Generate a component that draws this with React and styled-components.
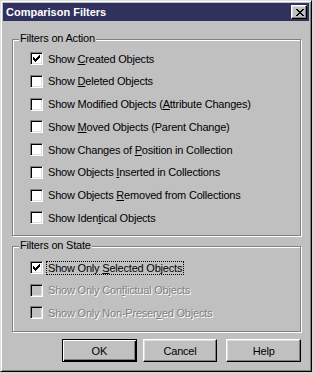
import styled, { createGlobalStyle } from "styled-components";

const FACE = "#c0c0c0";
const SHADOW = "#808080";
const LIGHT = "#dfdfdf";

const GlobalStyle = createGlobalStyle`
  html, body {
    margin: 0;
    padding: 0;
    background: #d6d6d6;
  }
  body {
    font-family: "Liberation Sans", Arial, sans-serif;
    font-size: 11px;
  }
`;

// Window frame
const Window = styled.div`
  box-sizing: border-box;
  width: 312px;
  height: 372px;
  display: flex;
  flex-direction: column;
  background: ${FACE};
  border: 1px solid;
  border-color: ${LIGHT} #000 #000 ${LIGHT};
  box-shadow: inset 1px 1px 0 #fff, inset -1px -1px 0 ${SHADOW};
  padding: 2px;
`;

const TitleBar = styled.div`
  height: 18px;
  flex-shrink: 0;
  display: flex;
  align-items: center;
  justify-content: space-between;
  background: #31315f;
  padding: 0 2px 0 3px;
`;

const Title = styled.span`
  color: #fff;
  font-weight: bold;
  font-size: 11px;
  line-height: 18px;
`;

const CloseButton = styled.button`
  box-sizing: border-box;
  width: 16px;
  height: 14px;
  padding: 0 0 0 1px;
  display: flex;
  align-items: center;
  justify-content: center;
  background: ${FACE};
  border: 1px solid;
  border-color: #fff #000 #000 #fff;
  box-shadow: inset -1px -1px 0 ${SHADOW}, inset 1px 1px 0 ${LIGHT};
`;

const Content = styled.div`
  flex: 1;
  display: flex;
  flex-direction: column;
  padding: 18px 8px 7px 9px;
`;

// Etched group box
const Group = styled.div`
  position: relative;
  box-sizing: border-box;
  width: 289px;
  height: ${({ $height }) => $height}px;
  margin-bottom: ${({ $after }) => $after || 0}px;
  border: 1px solid ${SHADOW};
  box-shadow: inset 1px 1px 0 #fff, 1px 1px 0 #fff;
  padding: ${({ $top }) => $top}px 0 0 17px;
`;

const GroupTitle = styled.span`
  position: absolute;
  left: 6px;
  top: -8px;
  padding: 0 1px;
  background: ${FACE};
  line-height: 13px;
  color: #000;
  letter-spacing: -0.2px;
`;

const Rows = styled.div`
  display: grid;
  grid-auto-rows: 13px;
  row-gap: ${({ $gap }) => $gap}px;
`;

const Row = styled.div`
  display: flex;
  align-items: center;
  gap: 4px;
  height: 13px;
`;

const Box = styled.span`
  box-sizing: border-box;
  width: 13px;
  height: 13px;
  flex-shrink: 0;
  display: flex;
  align-items: center;
  justify-content: center;
  border: 1px solid;
  border-color: ${SHADOW} #fff #fff ${SHADOW};
  box-shadow: inset 1px 1px 0 #000, inset -1px -1px 0 ${LIGHT};
  background: ${({ $disabled }) => ($disabled ? FACE : "#fff")};
`;

const Label = styled.span`
  padding: 0 1px;
  line-height: 12px;
  white-space: nowrap;
  letter-spacing: -0.2px;
  color: ${({ $disabled }) => ($disabled ? SHADOW : "#000")};
  text-shadow: ${({ $disabled }) => ($disabled ? "1px 1px 0 #fff" : "none")};
  outline: ${({ $focused }) => ($focused ? "1px dotted #000" : "none")};
`;

const ButtonRow = styled.div`
  display: flex;
  margin-top: 7px;
  padding-left: 50px;
`;

const Button = styled.button`
  box-sizing: border-box;
  width: 75px;
  height: 23px;
  margin-left: ${({ $left }) => $left || 0}px;
  padding: 0;
  font-family: "Liberation Sans", Arial, sans-serif;
  font-size: 11px;
  letter-spacing: -0.2px;
  color: #000;
  background: ${FACE};
  border: 1px solid;
  border-color: ${({ $default }) =>
    $default ? "#000" : "#fff #000 #000 #fff"};
  box-shadow: ${({ $default }) =>
    $default
      ? `inset 1px 1px 0 #fff, inset -1px -1px 0 #000, inset -2px -2px 0 ${SHADOW}`
      : `inset -1px -1px 0 ${SHADOW}, inset 1px 1px 0 ${LIGHT}`};
`;

const CheckMark = () => (
  <svg width="7" height="7" viewBox="0 0 7 7" shapeRendering="crispEdges">
    <path
      fill="#000"
      d="M6 0h1v1h-1z M5 1h2v1h-2z M0 2h1v1h-1z M4 2h3v1h-3z M0 3h2v1h-2z M3 3h3v1h-3z M0 4h5v1h-5z M1 5h3v1h-3z M2 6h1v1h-1z"
    />
  </svg>
);

const CloseGlyph = () => (
  <svg width="8" height="7" viewBox="0 0 8 7" shapeRendering="crispEdges">
    <path
      fill="#000"
      d="M0 0h2v1h-2z M6 0h2v1h-2z M1 1h2v1h-2z M5 1h2v1h-2z M2 2h4v1h-4z M3 3h2v1h-2z M2 4h4v1h-4z M1 5h2v1h-2z M5 5h2v1h-2z M0 6h2v1h-2z M6 6h2v1h-2z"
    />
  </svg>
);

const Check = ({ checked, disabled, focused, children }) => (
  <Row>
    <Box $disabled={disabled}>{checked && <CheckMark />}</Box>
    <Label $disabled={disabled} $focused={focused}>
      {children}
    </Label>
  </Row>
);

const App = () => (
  <>
    <GlobalStyle />
    <Window>
      <TitleBar>
        <Title>Comparison Filters</Title>
        <CloseButton aria-label="Close">
          <CloseGlyph />
        </CloseButton>
      </TitleBar>
      <Content>
        <Group $height={197} $top={12} $after={10}>
          <GroupTitle>Filters on Action</GroupTitle>
          <Rows $gap={9.75}>
            <Check checked>
              Show <u>C</u>reated Objects
            </Check>
            <Check>
              Show <u>D</u>eleted Objects
            </Check>
            <Check>
              Show Modified Objects (<u>A</u>ttribute Changes)
            </Check>
            <Check>
              Show <u>M</u>oved Objects (Parent Change)
            </Check>
            <Check>
              Show Changes of <u>P</u>osition in Collection
            </Check>
            <Check>
              Show Objects <u>I</u>nserted in Collections
            </Check>
            <Check>
              Show Objects <u>R</u>emoved from Collections
            </Check>
            <Check>
              Show Iden<u>t</u>ical Objects
            </Check>
          </Rows>
        </Group>
        <Group $height={86} $top={14}>
          <GroupTitle>Filters on State</GroupTitle>
          <Rows $gap={9.5}>
            <Check checked focused>
              Show Only <u>S</u>elected Objects
            </Check>
            <Check disabled>
              Show Only Con<u>f</u>lictual Objects
            </Check>
            <Check disabled>
              Show Only Non-Preser<u>v</u>ed Objects
            </Check>
          </Rows>
        </Group>
        <ButtonRow>
          <Button $default>OK</Button>
          <Button $left={6}>Cancel</Button>
          <Button $left={9}>Help</Button>
        </ButtonRow>
      </Content>
    </Window>
  </>
);

export default App;
